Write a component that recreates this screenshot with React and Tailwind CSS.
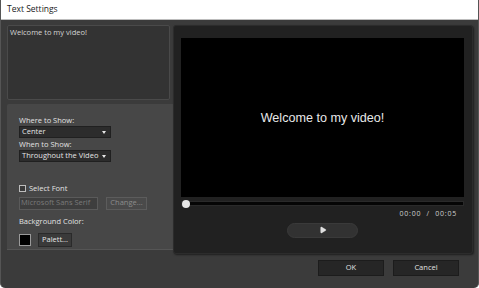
import { Play } from "lucide-react";

const ui = { fontFamily: '"Open Sans", "Noto Sans", sans-serif' };

function Dropdown({ label }) {
  return (
    <div className="flex h-[12px] w-[92px] items-center justify-between border border-[#202020] bg-[#2c2c2c] pl-[2px] pr-[4px] text-[7.5px] text-[#e4e4e4]">
      <span className="leading-none">{label}</span>
      <span className="h-0 w-0 border-x-[2.5px] border-t-[3px] border-x-transparent border-t-[#e8e8e8]" />
    </div>
  );
}

export default function App() {
  return (
    <div className="flex h-[288px] w-[479px] flex-col overflow-hidden rounded-b-[5px] border-x border-[#555] bg-[#3b3b3b]" style={ui}>
      <div className="flex h-[20px] shrink-0 items-center border-b border-[#bdbdbd] bg-white pl-[6px] text-[8.5px] text-[#1a1a1a]">
        Text Settings
      </div>

      <div className="flex pl-[6px] pt-[5px]">
        <div className="flex w-[166px] flex-col gap-[4px]">
          <div className="h-[75px] w-[163px] rounded-[2px] border border-[#4a4a4a] bg-[#333333] px-[2px] pt-[1px] text-[7.5px] text-[#d4d4d4]">
            Welcome to my video!
          </div>
          <div className="flex h-[146px] w-[166px] flex-col rounded-tl-[2px] border-b border-[#555] bg-[#474747] pl-[12px] pt-[11px] text-[7.5px] text-[#e2e2e2]">
            <div className="leading-[10px]">Where to Show:</div>
            <div className="mt-[1px]">
              <Dropdown label="Center" />
            </div>
            <div className="mt-[1px] leading-[10px]">When to Show:</div>
            <div className="mt-[1px]">
              <Dropdown label="Throughout the Video" />
            </div>
            <div className="mt-[23px] flex items-center gap-[3px]">
              <span className="h-[7px] w-[7px] border border-[#bdbdbd] bg-[#3a3a3a]" />
              <span className="leading-none">Select Font</span>
            </div>
            <div className="mt-[4px] flex items-center gap-[8px]">
              <div className="flex h-[13px] w-[79px] items-center border border-[#5a5a5a] bg-[#3e3e3e] pl-[1px] text-[#7a7a7a]">
                Microsoft Sans Serif
              </div>
              <div className="flex h-[13px] w-[41px] items-center justify-center border border-[#5c5c5c] bg-[#4a4a4a] text-[#8c8c8c]">
                Change...
              </div>
            </div>
            <div className="mt-[6px] leading-[10px]">Background Color:</div>
            <div className="mt-[7px] flex items-center gap-[7px]">
              <span className="h-[12px] w-[12px] border border-[#9a9a9a] bg-black" />
              <div className="flex h-[14px] w-[34px] items-center justify-center border border-[#2a2a2a] bg-[#3a3a3a] text-[#e6e6e6]">
                Palett...
              </div>
            </div>
          </div>
        </div>

        <div className="flex h-[229px] w-[300px] flex-col rounded-[3px] border border-[#2c2c2c] bg-[#212121] pl-[7px] pr-[8px] pt-[12px] shadow-[1px_1px_2px_rgba(0,0,0,0.5)]">
          <div className="flex h-[159px] w-[283px] items-center justify-center bg-black pt-[2px]">
            <span className="text-[12.6px] text-[#e8e8e8]" style={{ fontFamily: '"Liberation Sans", Arial, sans-serif' }}>
              Welcome to my video!
            </span>
          </div>
          <div className="relative mt-[4px] h-[5px] w-[283px] border border-[#2a2a2a] bg-[#050505]">
            <span className="absolute left-[0px] top-[-2px] h-[8px] w-[8px] rounded-full bg-[#e6e6e6]" />
          </div>
          <div className="mt-[3px] pr-[7px] text-right text-[7px] tracking-[0.8px] text-[#d0d0d0]">
            00:00&nbsp;&nbsp;/&nbsp;&nbsp;00:05
          </div>
          <div className="mt-[3px] flex justify-center">
            <div className="flex h-[15px] w-[71px] items-center justify-center rounded-full border border-[#3a3a3a] bg-[#323232]">
              <Play className="h-[8px] w-[8px] fill-[#e0e0e0] text-[#e0e0e0]" strokeWidth={1} />
            </div>
          </div>
        </div>
      </div>

      <div className="mt-[6px] flex justify-end gap-[9px] pr-[19px]">
        <div className="flex h-[16px] w-[66px] items-center justify-center border border-[#1c1c1c] bg-[#262626] text-[7.5px] text-[#e0e0e0]">
          OK
        </div>
        <div className="flex h-[16px] w-[66px] items-center justify-center border border-[#1c1c1c] bg-[#262626] text-[7.5px] text-[#e0e0e0]">
          Cancel
        </div>
      </div>
    </div>
  );
}
